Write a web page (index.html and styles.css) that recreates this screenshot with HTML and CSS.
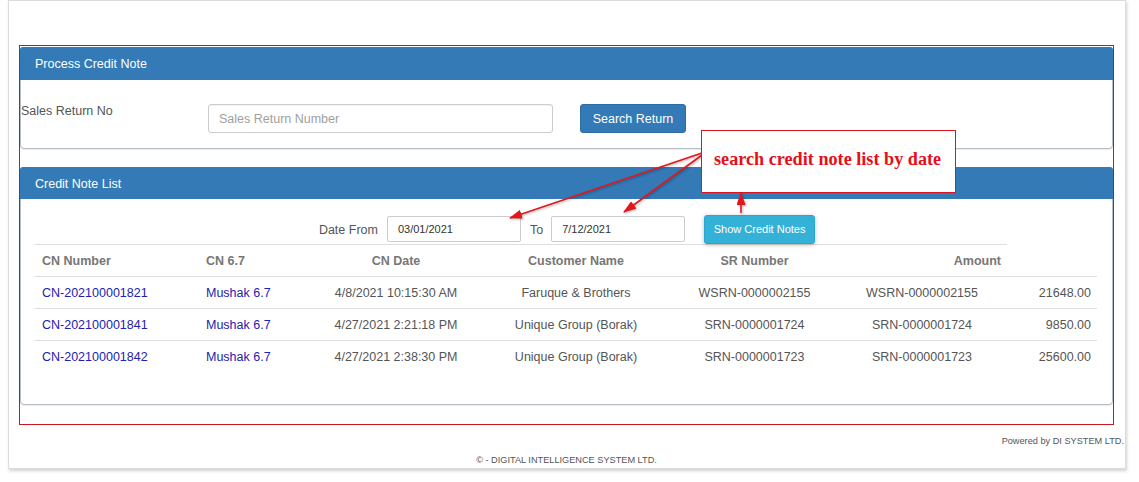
FILE: index.html
```html
<!DOCTYPE html>
<html>
<head>
<meta charset="utf-8">
<title>Process Credit Note</title>
<link rel="stylesheet" href="styles.css">
</head>
<body>
<div class="page">
  <div class="frame">
    <div class="panel">
      <div class="panel-heading">Process Credit Note</div>
      <div class="panel-body search-body">
        <label class="sr-label">Sales Return No</label>
        <input class="sr-input" type="text" placeholder="Sales Return Number">
        <button class="btn btn-primary">Search Return</button>
      </div>
    </div>
    <div class="panel panel-list">
      <div class="panel-heading">Credit Note List</div>
      <div class="panel-body list-body">
        <div class="filter">
          <span class="f-label">Date From</span>
          <input class="date-input" type="text" value="03/01/2021">
          <span class="f-label to">To</span>
          <input class="date-input" type="text" value="7/12/2021">
          <button class="btn btn-info">Show Credit Notes</button>
        </div>
        <table class="cn-table">
          <colgroup>
            <col class="c1"><col class="c2"><col class="c3"><col class="c4"><col class="c5"><col class="c6"><col class="c7">
          </colgroup>
          <thead>
            <tr>
              <th class="left">CN Number</th>
              <th class="left">CN 6.7</th>
              <th>CN Date</th>
              <th>Customer Name</th>
              <th>SR Number</th>
              <th class="right">Amount</th>
            </tr>
          </thead>
          <tbody>
            <tr>
              <td class="left"><a>CN-202100001821</a></td>
              <td class="left"><a>Mushak 6.7</a></td>
              <td>4/8/2021 10:15:30 AM</td>
              <td>Faruque &amp; Brothers</td>
              <td>WSRN-0000002155</td>
              <td>WSRN-0000002155</td>
              <td class="right">21648.00</td>
            </tr>
            <tr>
              <td class="left"><a>CN-202100001841</a></td>
              <td class="left"><a>Mushak 6.7</a></td>
              <td>4/27/2021 2:21:18 PM</td>
              <td>Unique Group (Borak)</td>
              <td>SRN-0000001724</td>
              <td>SRN-0000001724</td>
              <td class="right">9850.00</td>
            </tr>
            <tr>
              <td class="left"><a>CN-202100001842</a></td>
              <td class="left"><a>Mushak 6.7</a></td>
              <td>4/27/2021 2:38:30 PM</td>
              <td>Unique Group (Borak)</td>
              <td>SRN-0000001723</td>
              <td>SRN-0000001723</td>
              <td class="right">25600.00</td>
            </tr>
            <tr class="empty"><td colspan="7"></td></tr>
          </tbody>
        </table>
      </div>
    </div>
  </div>
  <div class="powered">Powered by DI SYSTEM LTD.</div>
  <div class="copy">&copy; - DIGITAL INTELLIGENCE SYSTEM LTD.</div>
</div>

<svg class="arrows" width="1139" height="482" viewBox="0 0 1139 482">
  <defs>
    <marker id="ah" viewBox="0 0 13 9" refX="12" refY="4.5" markerWidth="13" markerHeight="9" orient="auto" markerUnits="userSpaceOnUse">
      <path d="M0,0 L13,4.5 L0,9 z" fill="#e3161c"/>
    </marker>
  </defs>
  <line x1="702" y1="153" x2="510" y2="218" stroke="#e3161c" stroke-width="1.6" marker-end="url(#ah)"/>
  <line x1="702" y1="155" x2="624" y2="212" stroke="#e3161c" stroke-width="1.6" marker-end="url(#ah)"/>
  <line x1="741" y1="213" x2="741" y2="193" stroke="#e3161c" stroke-width="1.6" marker-end="url(#ah)"/>
</svg>
<div class="callout">search credit note list by date</div>
</body>
</html>
```

FILE: styles.css
```css
html, body {
  margin: 0;
  padding: 0;
  background: #ffffff;
}

body {
  position: relative;
  width: 1139px;
  height: 482px;
  overflow: hidden;
  font-family: "Liberation Sans", Arial, sans-serif;
  font-size: 12.5px;
  color: #555555;
}

.page {
  margin-left: 8px;
  width: 1118px;
  height: 469px;
  box-sizing: border-box;
  border: 1px solid #dcdcdc;
  box-shadow: 1px 2px 3px rgba(0, 0, 0, 0.18);
  padding: 44px 11px 0 10px;
  background: #ffffff;
}

.frame {
  border: 1px solid #c8161e;
  padding: 1px 0 19px 0;
}

.panel {
  border: 1px solid #b4bcc6;
  border-radius: 4px;
  background: #ffffff;
  box-shadow: 0 1px 1px rgba(0, 0, 0, 0.08);
}

.panel-heading {
  margin: -1px -1px 0 -1px;
  height: 33px;
  box-sizing: border-box;
  padding: 2px 0 0 15px;
  line-height: 31px;
  background: #337ab7;
  color: #ffffff;
  font-size: 12.5px;
  border-radius: 3px 3px 0 0;
}

.panel-list {
  margin-top: 18px;
}

.panel-list .panel-heading {
  height: 32px;
  line-height: 30px;
}

.search-body {
  display: flex;
  align-items: flex-start;
  padding: 24px 0 15px 0;
}

.sr-label {
  width: 187px;
  line-height: 14px;
  color: #555555;
}

.sr-input {
  width: 345px;
  height: 29px;
  box-sizing: border-box;
  border: 1px solid #cccccc;
  border-radius: 3px;
  padding: 0 10px;
  font-family: "Liberation Sans", Arial, sans-serif;
  font-size: 12.5px;
  color: #555555;
  box-shadow: inset 0 1px 1px rgba(0, 0, 0, 0.06);
  outline: none;
}

.sr-input::placeholder {
  color: #a0a0a0;
}

.btn {
  box-sizing: border-box;
  height: 29px;
  border-radius: 3px;
  color: #ffffff;
  font-family: "Liberation Sans", Arial, sans-serif;
  padding: 0;
  cursor: pointer;
}

.btn-primary {
  margin-left: 27px;
  width: 106px;
  background: #337ab7;
  border: 1px solid #2e6da4;
  font-size: 12.5px;
}

.btn-info {
  margin-left: 19px;
  width: 111px;
  background: #33b1d7;
  border: 1px solid #2aa5cc;
  font-size: 11px;
  box-shadow: 0 1px 4px rgba(0, 0, 0, 0.25);
}

.list-body {
  padding: 15px 13px 31px 14px;
}

.filter {
  display: flex;
  align-items: center;
  justify-content: center;
  height: 30px;
}

.f-label {
  color: #555555;
  font-size: 12.5px;
  margin-right: 9px;
  padding-top: 1px;
}

.f-label.to {
  margin-left: 9px;
  margin-right: 8px;
}

.date-input {
  width: 134px;
  height: 26px;
  box-sizing: border-box;
  border: 1px solid #cccccc;
  border-radius: 2px;
  padding: 0 10px;
  font-family: "Liberation Sans", Arial, sans-serif;
  font-size: 11px;
  color: #333333;
  outline: none;
}

.cn-table {
  width: 1062px;
  table-layout: fixed;
  border-collapse: separate;
  border-spacing: 0;
}

.c1 { width: 164px; }
.c2 { width: 113px; }
.c3 { width: 168px; }
.c4 { width: 192px; }
.c5 { width: 165px; }
.c6 { width: 170px; }
.c7 { width: 90px; }

.cn-table th,
.cn-table td {
  border-top: 1px solid #dddddd;
  line-height: 30px;
  padding: 1px 7px 0 7px;
  text-align: center;
  white-space: nowrap;
  font-size: 12.5px;
}

.cn-table th {
  font-weight: bold;
  color: #777777;
}

.cn-table td {
  color: #555555;
}

.cn-table .left {
  text-align: left;
}

.cn-table .right {
  text-align: right;
  padding-right: 6px;
}

.cn-table a {
  color: #2222b0;
  text-decoration: none;
}

.cn-table tr.empty td {
  border-top: none;
}

.powered {
  margin-top: 11px;
  margin-right: -10px;
  text-align: right;
  font-size: 9.2px;
  line-height: 11px;
  color: #555555;
}

.copy {
  margin-top: 8px;
  text-align: center;
  font-size: 9.2px;
  line-height: 11px;
  color: #555555;
}

.arrows {
  position: absolute;
  left: 0;
  top: 0;
  pointer-events: none;
  filter: drop-shadow(1px 1px 1px rgba(0, 0, 0, 0.3));
}

.callout {
  position: absolute;
  left: 701px;
  top: 130px;
  width: 255px;
  height: 63px;
  box-sizing: border-box;
  border: 1px solid #d9161f;
  background: #ffffff;
  padding: 17px 0 0 12px;
  font-family: "Liberation Serif", "Times New Roman", serif;
  font-weight: bold;
  font-size: 18.2px;
  line-height: 22px;
  color: #e3101a;
  white-space: nowrap;
}
```
